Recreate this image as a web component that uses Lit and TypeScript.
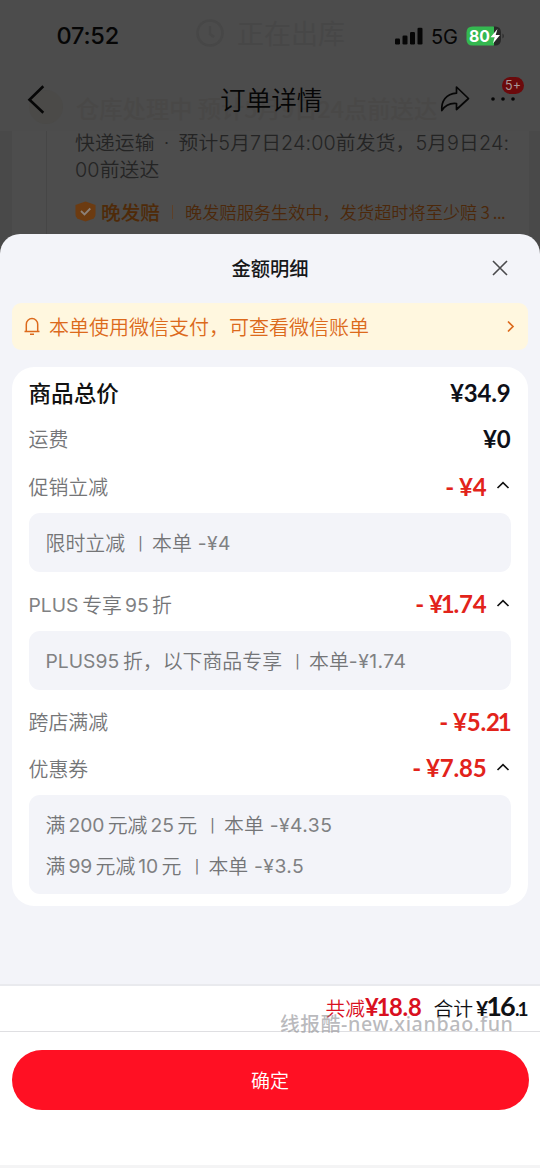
import { LitElement, html, css } from "lit";
import { customElement, property } from "lit/decorators.js";
import { classMap } from "lit/directives/class-map.js";

interface Item {
  label: string;
  amount: string;
  kind?: "total" | "minus";
  open?: boolean;
  notes?: string[];
}

const ITEMS: Item[] = [
  { label: "商品总价", amount: "34.9", kind: "total" },
  { label: "运费", amount: "0" },
  { label: "促销立减", amount: "4", kind: "minus", open: true, notes: ["限时立减丨本单 -¥4"] },
  { label: "PLUS专享95折", amount: "1.74", kind: "minus", open: true, notes: ["PLUS95折，以下商品专享丨本单-¥1.74"] },
  { label: "跨店满减", amount: "5.21", kind: "minus" },
  {
    label: "优惠券",
    amount: "7.85",
    kind: "minus",
    open: true,
    notes: ["满200元减25元丨本单 -¥4.35", "满99元减10元丨本单 -¥3.5"],
  },
];

/** Digits with a proportional "1", which the bold numeral face sets too wide. */
const digits = (s: string) => s.split("").map((c) => (c === "1" ? html`<span class="one">1</span>` : c));

/** Splits mixed text into Han, Latin and divider runs so each gets its own spacing. */
@customElement("mixed-text")
class MixedText extends LitElement {
  @property() text = "";

  static styles = css`
    :host { display: flex; align-items: center; white-space: pre; line-height: 28px; }
    .latin { font-family: Inter, sans-serif; font-size: 19.3px; font-weight: 400; color: #808183; }
    .latin.gap { margin: 0 3.2px 0 3px; }
    .latin.lead { margin-right: 3.8px; }
    .latin.tail { margin-left: 0; letter-spacing: 0.45px; }
    .bar { width: 27px; text-align: center; font-size: 17px; text-indent: 4px; }
  `;

  render() {
    const runs = this.text.match(/丨|[\x20-\x7e¥]+|[^\x20-\x7e¥丨]+/g) ?? [];
    return runs.map((run, i) => {
      if (run === "丨") return html`<span class="bar">${run}</span>`;
      const latin = /[\x20-\x7e¥]/.test(run);
      const last = i === runs.length - 1;
      return html`<span
        class=${classMap({ latin, lead: latin && i === 0, tail: latin && last, gap: latin && i > 0 && !last })}
        >${run}</span
      >`;
    });
  }
}

@customElement("detail-card")
class DetailCard extends LitElement {
  static styles = css`
    :host { display: block; box-sizing: border-box; background: #fff; border-radius: 22px; padding: 2px 17.500px 12px 17px; color: #747577; font-size: 19.9px; font-weight: 350; }
    .row { display: flex; align-items: center; justify-content: space-between; height: 46.4px; }
    .row.open { height: 51px; }
    .row.plus { height: 52px; }
    .total { font-size: 22.6px; font-weight: 500; color: #111; }
    .price { display: flex; align-items: center; font-family: Lato, sans-serif; font-weight: 700; font-size: 24px; letter-spacing: -0.2px; color: #0e1018; white-space: pre; }
    .one { margin: 0 -2.600px 0 -2px; }
    .one:last-child { margin-right: -1px; }
    .minus { color: #e2231a; padding-bottom: 2px; }
    .dash { margin-right: 5px; }
    .arrow { margin-left: 9px; margin-right: 1px; display: block; }
    .notes { background: #f3f4f9; border-radius: 11px; padding: 10px 17px 7.500px; margin-bottom: 7px; }
    .notes mixed-text { height: 41.4px; }
    .notes.last { margin: 3px 0 0; padding: 9px 17px 7.500px; }
    .after { margin-top: 9.500px; }
  `;

  render() {
    return ITEMS.map(
      (it, i) => html`
        <div class=${classMap({ row: true, open: i === 2, plus: i === 3, after: i === 4 })}>
          ${it.kind === "total" ? html`<span class="total">${it.label}</span>` : html`<mixed-text .text=${it.label}></mixed-text>`}
          <span class=${classMap({ price: true, minus: it.kind === "minus" })}>
            ${it.kind === "minus" ? html`<span class="dash">-</span>` : ""}<span>¥${digits(it.amount)}</span>
            ${it.open
              ? html`<svg class="arrow" width="14" height="10" viewBox="0 0 14 10">
                  <path d="M1.500 7 7 1.700 12.500 7" fill="none" stroke="#111" stroke-width="1.700" />
                </svg>`
              : ""}
          </span>
        </div>
        ${it.notes
          ? html`<div class=${classMap({ notes: true, last: i === 5 })}>
              ${it.notes.map((n) => html`<mixed-text .text=${n}></mixed-text>`)}
            </div>`
          : ""}
      `
    );
  }
}

@customElement("app-root")
class AppRoot extends LitElement {
  static styles = css`
    :host { display: block; font-family: "Noto Sans CJK SC", sans-serif; }
    .screen { width: 540px; height: 1168px; overflow: hidden; display: flex; flex-direction: column; position: relative; background: #4c4c4c; }
    .top { flex: none; height: 131px; box-sizing: border-box; color: #060606; position: relative; z-index: 1; }
    .status { display: flex; align-items: center; height: 72px; padding: 0 36px 0 56.500px; }
    .clock { font: 500 23.5px/28px Inter, sans-serif; letter-spacing: -0.2px; flex: 1; }
    .net { font: 400 20px/28px Inter, sans-serif; margin: 1px 8px 0 8px; }
    .nav { display: grid; grid-template-columns: 1fr auto 1fr; align-items: center; height: 54px; padding: 0 25px 0 26.500px; }
    .nav h1 { margin: 0; font-size: 25.6px; font-weight: 350; line-height: 36px; padding-left: 1px; }
    .tools { display: flex; justify-content: flex-end; align-items: center; gap: 21px; }
    .badge { position: absolute; z-index: 2; left: 502px; top: 77px; width: 22px; height: 17px; border-radius: 9px; background: #6b0a0c; color: #a99; font: 400 12.500px/17px Inter, sans-serif; text-align: center; }
    .ghost { position: absolute; white-space: nowrap; }
    .ghost.state { left: 195px; top: 14px; display: flex; align-items: center; gap: 12px; font-size: 27px; line-height: 38px; color: #474747; }
    .ghost.eta { left: 76px; top: 93px; font-size: 23.3px; font-weight: 500; line-height: 30px; color: #494847; }
    .ghost.dot { left: 29px; top: 90px; width: 34px; height: 34px; border-radius: 17px; background: #4b4a48; }
    .order { flex: none; height: 134px; background: #494949; padding: 0 11.500px; }
    .order-card { height: 100%; background: #4d4d4d; display: flex; }
    .track { width: 34px; border-right: 1px solid #464646; }
    .order-main { padding-left: 28.500px; white-space: nowrap; }
    .ship { margin: -1px 0 0; font: 350 19.8px/27px Inter, "Noto Sans CJK SC", sans-serif; color: #242424; white-space: pre; letter-spacing: 0.1px; }
    .ship span { margin: 0 3.500px; }
    .claim { display: flex; align-items: center; margin-top: 13.500px; color: #4c280a; height: 28px; }
    .claim b { font-size: 19.7px; font-weight: 500; margin: 0 12px 0 5px; color: #4f2a08; }
    .claim i { width: 1px; height: 14px; background: #5e4028; margin-right: 12px; }
    .claim span { font-size: 17.2px; font-weight: 350; }
    .claim .more { letter-spacing: -0.5px; }
    .sheet { position: relative; z-index: 1; flex: 1; margin-top: -31px; background: #f3f4f9; border-radius: 20px 20px 0 0; display: flex; flex-direction: column; overflow: hidden; }
    .head { display: grid; grid-template-columns: 1fr auto 1fr; align-items: center; box-sizing: border-box; height: 69px; padding: 0 31.500px 2px; }
    .head h2 { margin: 0; font-size: 19.3px; line-height: 28px; font-weight: 500; color: #17181a; grid-column: 2; }
    .close { justify-self: end; }
    .notice { display: flex; align-items: center; box-sizing: border-box; height: 47px; margin: 0 12px; padding: 0 13px 1px 10.500px; background: #fff7df; border-radius: 9px; color: #dc6a1c; font-size: 20px; font-weight: 350; }
    .notice span { flex: 1; margin-left: 7.500px; }
    detail-card { margin: 17px 12px 0 11.500px; height: 539px; }
    .foot { margin-top: auto; background: #fff; border-top: 2px solid #e9eaee; }
    .sum { display: flex; justify-content: flex-end; align-items: baseline; height: 46px; line-height: 40px; box-sizing: border-box; border-bottom: 1px solid #dfdfe2; padding-right: 12.500px; font-size: 19.8px; font-weight: 350; color: #101114; }
    .sum .cut { color: #d9101f; margin-right: 12px; }
    .sum b { font-family: Lato, sans-serif; font-weight: 700; }
    .one { margin: 0 -2px 0 -2px; }
    .one:last-child { margin-right: -1px; }
    .cut b { font-size: 23.8px; letter-spacing: -0.3px; }
    .sum .yen { font-size: 21px; margin-left: 3px; }
    .sum .int { font-size: 27px; letter-spacing: -0.8px; }
    .sum .dec { font-size: 19px; }
    .ok { display: block; width: 517px; height: 60px; margin: 18px 0 0 11.500px; border: 0; padding: 0; border-radius: 30px; background: #ff1023; color: #fff; font: 350 19px/60px "Noto Sans CJK SC", sans-serif; }
    .end { height: 3px; margin-top: 55px; background: #f4f4f5; }
    .mark { position: absolute; z-index: 2; left: 280px; top: 1010px; font-size: 19.7px; line-height: 27px; color: rgba(140, 140, 145, 0.6); white-space: nowrap; font-family: "Noto Sans", "Noto Sans CJK SC", sans-serif; font-weight: 500; letter-spacing: 0.65px; }
    svg { display: block; }
  `;

  render() {
    return html`
      <div class="screen">
        <div class="ghost state">
          <svg width="30" height="30" viewBox="0 0 30 30" fill="none" stroke="#474747" stroke-width="2.500">
            <circle cx="15" cy="15" r="12.500" />
            <path d="M15 8v8l4 3" />
          </svg>
          正在出库
        </div>
        <div class="ghost dot"></div>
        <div class="ghost eta">仓库处理中 预计5月9日24点前送达</div>
        <div class="top">
          <div class="status">
            <span class="clock">07:52</span>
            <svg width="28" height="18" viewBox="0 0 28 18" fill="#060606">
              <rect x="0" y="11.500" width="5" height="6" rx="1.300" />
              <rect x="7.500" y="8.500" width="5" height="9" rx="1.300" />
              <rect x="15" y="5" width="5" height="12.500" rx="1.300" />
              <rect x="22.500" y="0.700" width="5" height="16.800" rx="1.300" />
            </svg>
            <span class="net">5G</span>
            <svg width="38" height="20" viewBox="0 0 38 20">
              <path d="M27 .5h2q6 0 6 6v7q0 6-6 6h-2z" fill="#292929" />
              <path d="M36.500 7.500q1.300.8 1.300 2.500t-1.300 2.500z" fill="#292929" />
              <path d="M6.500.5H28v19H6.500q-6 0-6-6v-7q0-6 6-6z" fill="#34b850" />
              <text x="3" y="15.600" font-family="Inter" font-size="15.800" font-weight="700" fill="#fff">80</text>
              <path d="M31.500 3 24.500 11.300h4L27 17.500l7-8.500h-4.300z" fill="#fff" />
            </svg>
          </div>
          <div class="nav">
            <svg width="18" height="30" viewBox="0 0 18 30" fill="none" stroke="#060606" stroke-width="2.600">
              <path d="M16.300 2.200 2.500 15.700l13.800 13" />
            </svg>
            <h1>订单详情</h1>
            <div class="tools">
              <svg width="30" height="29" viewBox="0 0 30 29" fill="none" stroke="#060606" stroke-width="1.700" stroke-linejoin="round">
                <path d="M16.500 2 28.500 13.500l-12 11V18.500C10 17.800 5 20.500 1.800 25.500 1.200 16 6 9 16.500 8.200z" />
              </svg>
              <svg width="24" height="6" viewBox="0 0 24 6" fill="#060606">
                <circle cx="2" cy="3" r="1.800" />
                <circle cx="12" cy="3" r="1.800" />
                <circle cx="22" cy="3" r="1.800" />
              </svg>
            </div>
          </div>
        </div>
        <div class="badge">5+</div>
        <div class="order">
          <div class="order-card">
            <div class="track"></div>
            <div class="order-main">
              <p class="ship">快递运输<span> · </span>预计5月7日24:00前发货，5月9日24:
00前送达</p>
              <div class="claim">
                <svg width="21" height="21" viewBox="0 0 21 21">
                  <path d="M10.500.5 20.500 4v9q0 3.500-3 5l-7 2.500-7-2.500q-3-1.500-3-5V4z" fill="#6c3b11" />
                  <path d="m6 10 3.500 3.500L15.300 7.500" fill="none" stroke="#8c8078" stroke-width="1.800" />
                </svg>
                <b>晚发赔</b><i></i><span>晚发赔服务生效中，发货超时将至少赔</span><span class="more">&nbsp;3&nbsp;...</span>
              </div>
            </div>
          </div>
        </div>
        <div class="sheet">
          <div class="head">
            <h2>金额明细</h2>
            <svg class="close" width="18" height="18" viewBox="0 0 18 18" stroke="#4a4a4c" stroke-width="1.600">
              <path d="m2 2 14 14M16 2 2 16" />
            </svg>
          </div>
          <div class="notice">
            <svg width="19" height="20" viewBox="0 0 19 20" fill="none" stroke="#dc6a1c" stroke-width="1.500">
              <path d="M1.500 15.500h15M3.300 15.500V8.300a5.700 5.700 0 0 1 11.400 0v7.200M7 18.300h4" />
            </svg>
            <span>本单使用微信支付，可查看微信账单</span>
            <svg width="9" height="13" viewBox="0 0 9 13" fill="none" stroke="#dc6a1c" stroke-width="1.700">
              <path d="m2 1.500 5 5-5 5" />
            </svg>
          </div>
          <detail-card></detail-card>
          <div class="foot">
            <div class="sum">
              <span class="cut">共减<b>¥${digits("18.8")}</b></span>
              <span>合计</span><b class="yen">¥</b><b class="int">${digits("16")}</b><b class="dec">.${digits("1")}</b>
            </div>
            <button class="ok">确定</button>
            <div class="end"></div>
          </div>
        </div>
        <div class="mark">线报酷-new.xianbao.fun</div>
      </div>
    `;
  }
}
